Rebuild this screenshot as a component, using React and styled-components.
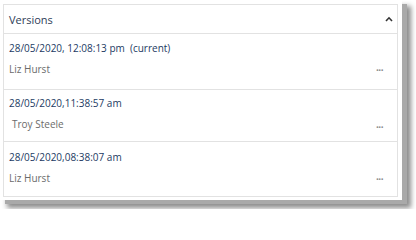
import React from "react";
import styled, { createGlobalStyle } from "styled-components";

const Global = createGlobalStyle`
  html, body { margin: 0; padding: 0; background: #ffffff; }
  body { font-family: "Open Sans", "Noto Sans", sans-serif; }
`;

const Page = styled.main`
  width: 416px;
  height: 209px;
  overflow: hidden;
  background: #ffffff;
`;

const Frame = styled.div`
  width: 402px;
  height: 200px;
  box-sizing: border-box;
  padding: 4px 0 0 3px;
  background: #ffffff;
  box-shadow: 5px 4px 0 0 #a9a9a9, 8px 7px 5px 1px rgba(0, 0, 0, 0.45);
`;

const Panel = styled.section`
  width: 395px;
  height: 193px;
  box-sizing: border-box;
  border: 1px solid #e2e2e2;
  background: #ffffff;
  display: flex;
  flex-direction: column;
`;

const Header = styled.header`
  height: 28px;
  flex: none;
  display: flex;
  align-items: center;
  justify-content: space-between;
  padding: 0 4px 0 5px;
  border-bottom: 1px solid #e2e2e2;
`;

const Title = styled.h2`
  margin: 0;
  font-size: 11px;
  font-weight: 400;
  color: #2e4057;
`;

const Chevron = styled.svg`
  width: 8px;
  height: 6px;
  display: block;
`;

const Row = styled.div`
  height: ${(p) => p.$h}px;
  flex: none;
  box-sizing: border-box;
  display: grid;
  grid-template-columns: 1fr auto;
  padding: ${(p) => p.$top}px 14px 0 5px;
  border-bottom: ${(p) => (p.$last ? "none" : "1px solid #e2e2e2")};
`;

const Info = styled.div`
  display: flex;
  flex-direction: column;
  gap: 7px;
`;

const Stamp = styled.div`
  font-size: 10px;
  line-height: 14px;
  color: #1c3a63;
  white-space: pre;
`;

const Author = styled.div`
  font-size: 10px;
  line-height: 14px;
  color: #6b6b6b;
  padding-left: ${(p) => p.$indent || 0}px;
`;

const More = styled.div`
  font-size: 10px;
  line-height: 10px;
  font-weight: 700;
  color: #8a8a8a;
  letter-spacing: -0.5px;
  padding-top: ${(p) => p.$dots}px;
`;

const versions = [
  { stamp: "28/05/2020, 12:08:13 pm  (current)", author: "Liz Hurst", h: 56, top: 7, dots: 21 },
  { stamp: "28/05/2020,11:38:57 am", author: "Troy Steele", h: 52, top: 6, dots: 23, indent: 3 },
  { stamp: "28/05/2020,08:38:07 am", author: "Liz Hurst", h: 55, top: 8, dots: 21, last: true },
];

export default function App() {
  return (
    <>
      <Global />
      <Page>
        <Frame>
          <Panel>
            <Header>
              <Title>Versions</Title>
              <Chevron viewBox="0 0 8 6">
                <path d="M1 5 L4 1.8 L7 5" fill="none" stroke="#333" strokeWidth="1.6" />
              </Chevron>
            </Header>
            {versions.map((v, i) => (
              <Row key={i} $h={v.h} $top={v.top} $last={v.last}>
                <Info>
                  <Stamp>{v.stamp}</Stamp>
                  <Author $indent={v.indent}>{v.author}</Author>
                </Info>
                <More $dots={v.dots}>...</More>
              </Row>
            ))}
          </Panel>
        </Frame>
      </Page>
    </>
  );
}
